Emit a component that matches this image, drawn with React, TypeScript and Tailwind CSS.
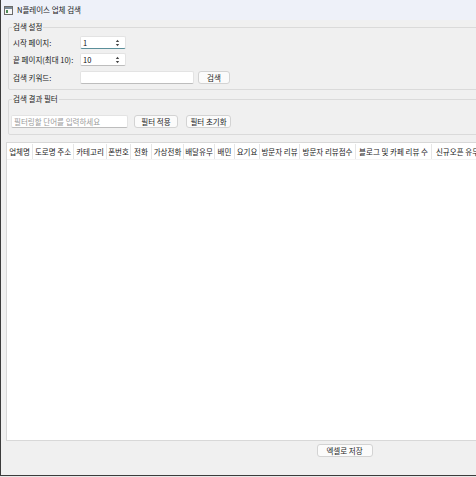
import React from 'react';

const font = { fontFamily: '"Noto Sans CJK KR", "Noto Sans", sans-serif' };

const columns: { label: string; w: string }[] = [
  { label: '업체명', w: 'w-[26px]' },
  { label: '도로명 주소', w: 'w-[41px]' },
  { label: '카테고리', w: 'w-[33px]' },
  { label: '폰번호', w: 'w-[24px]' },
  { label: '전화', w: 'w-[21px]' },
  { label: '가상전화', w: 'w-[32px]' },
  { label: '배달유무', w: 'w-[31px]' },
  { label: '배민', w: 'w-[20px]' },
  { label: '요기요', w: 'w-[25px]' },
  { label: '방문자 리뷰', w: 'w-[40px]' },
  { label: '방문자 리뷰점수', w: 'w-[56px]' },
  { label: '블로그 및 카페 리뷰 수', w: 'w-[76px]' },
  { label: '신규오픈 유무', w: 'w-[52px]' },
];

const SpinArrows = () => (
  <svg width="5" height="8" viewBox="0 0 5 8" className="shrink-0">
    <path d="M2.5 0.8 L4.2 3 L0.8 3 Z" fill="#444" />
    <path d="M2.5 7.2 L4.2 5 L0.8 5 Z" fill="#444" />
  </svg>
);

const SpinBox = ({ value, focused }: { value: string; focused?: boolean }) => (
  <div
    className={`w-[46px] h-[13px] bg-white flex items-center pl-[2px] pr-[5px] rounded-[2px] border border-[#e3e3e3] ${
      focused ? 'border-b-[#5b8f9a]' : 'border-b-[#bdbdbd]'
    }`}
  >
    <span className="flex-1 text-[7.5px] text-[#111] leading-none">{value}</span>
    <SpinArrows />
  </div>
);

const Button = ({ children, w }: { children: React.ReactNode; w: string }) => (
  <div
    className={`${w} h-[13px] bg-[#fbfbfb] border border-[#d3d3d3] rounded-[3px] flex items-center justify-center text-[7.5px] text-[#1b1b1b] leading-none`}
  >
    {children}
  </div>
);

const GroupBox = ({ title, children, className }: { title: string; children: React.ReactNode; className?: string }) => (
  <fieldset className={`border border-[#dadada] rounded-[2px] mx-[7px] ${className ?? ''}`}>
    <legend className="ml-[3px] px-[1px] text-[7.5px] leading-[12px] text-[#1b1b1b]">{title}</legend>
    {children}
  </fieldset>
);

export default function App() {
  return (
    <div className="w-[476px] h-[477px] overflow-hidden bg-[#e8e8e8]" style={font}>
      <div className="w-[688px] h-[476px] bg-[#f0f0f0] border-l border-b border-[#3c3c3c] flex flex-col">
        {/* title bar */}
        <div className="h-[20px] shrink-0 bg-[#eef1f9] flex items-center pl-[3px] gap-[4px]">
          <svg width="9" height="9" viewBox="0 0 9 9">
            <rect x="0.5" y="0.5" width="8" height="8" fill="#f7f7f7" stroke="#6b6b6b" />
            <rect x="1" y="1" width="7" height="2" fill="#7a8a99" />
            <rect x="2" y="4" width="2" height="3" fill="#4f8a5a" />
          </svg>
          <span className="text-[7.5px] text-[#1a1a1a] leading-none">N플레이스 업체 검색</span>
        </div>

        <GroupBox title="검색 설정" className="mt-[1px] pt-[3px] pb-[5px]">
          <div className="flex flex-col gap-[4px] pl-[4px]">
            <div className="flex items-center h-[13px]">
              <span className="w-[67px] text-[7.5px] text-[#1b1b1b] leading-none">시작 페이지:</span>
              <SpinBox value="1" focused />
            </div>
            <div className="flex items-center h-[13px]">
              <span className="w-[67px] text-[7.5px] text-[#1b1b1b] leading-none">끝 페이지(최대 10):</span>
              <SpinBox value="10" />
            </div>
            <div className="flex items-center h-[13px] mt-[1px]">
              <span className="w-[67px] text-[7.5px] text-[#1b1b1b] leading-none">검색 키워드:</span>
              <div className="w-[114px] h-[13px] bg-white border border-[#e3e3e3] border-b-[#bdbdbd] rounded-[2px]" />
              <div className="ml-[4px]">
                <Button w="w-[32px]">검색</Button>
              </div>
            </div>
          </div>
        </GroupBox>

        <GroupBox title="검색 결과 필터" className="mt-[3px] pt-[10px] pb-[6px]">
          <div className="flex items-center h-[13px] pl-[2px]">
            <div className="w-[117px] h-[13px] bg-white border border-[#e3e3e3] border-b-[#bdbdbd] rounded-[2px] flex items-center pl-[2px]">
              <span className="text-[7.5px] text-[#9a9a9a] leading-none">필터링할 단어를 입력하세요</span>
            </div>
            <div className="ml-[6px]">
              <Button w="w-[44px]">필터 적용</Button>
            </div>
            <div className="ml-[8px]">
              <Button w="w-[45px]">필터 초기화</Button>
            </div>
          </div>
        </GroupBox>

        {/* table */}
        <div className="mx-[5px] mt-[7px] h-[299px] bg-white border border-[#d8d8d8] shrink-0">
          <div className="flex h-[17px] pt-[1px] border-b border-[#f4f4f4]">
            {columns.map((c) => (
              <div
                key={c.label}
                className={`${c.w} shrink-0 border-r border-[#e6e6e6] flex items-center justify-center text-[7.5px] text-[#1b1b1b] leading-none whitespace-nowrap`}
              >
                {c.label}
              </div>
            ))}
          </div>
        </div>

        <div className="flex justify-center mt-[3px]">
          <Button w="w-[56px]">엑셀로 저장</Button>
        </div>
      </div>
    </div>
  );
}
